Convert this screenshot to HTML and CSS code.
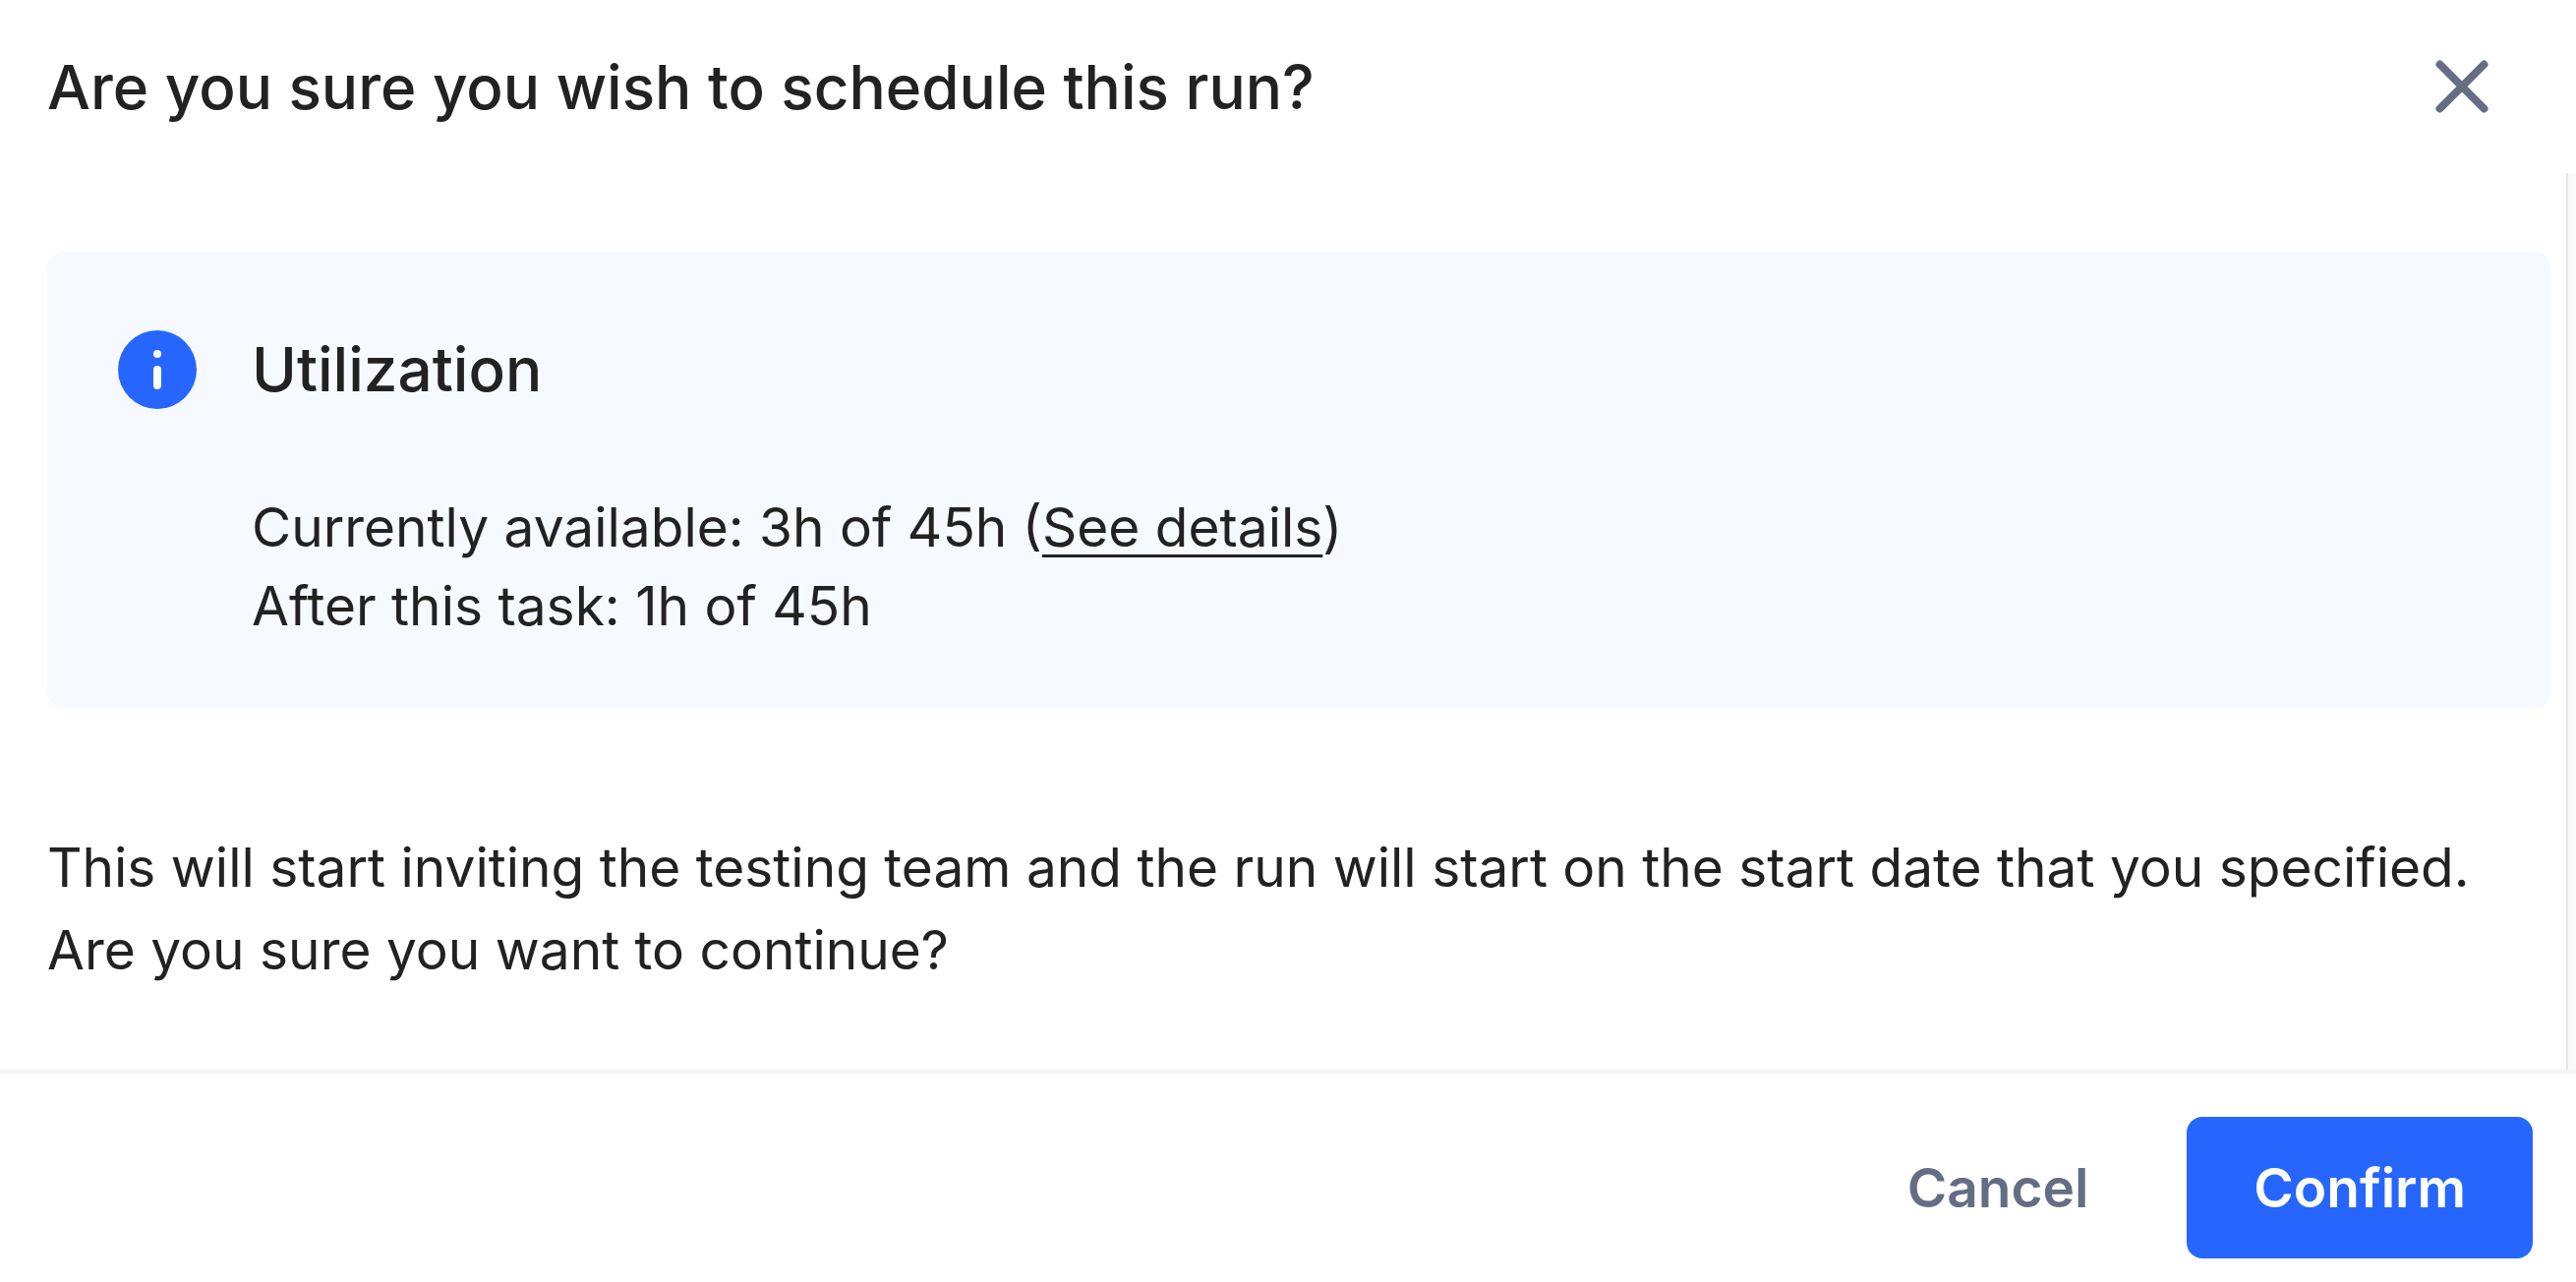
FILE: index.html
```html
<!DOCTYPE html>
<html lang="en">
<head>
    <meta charset="utf-8">
    <title>Schedule run</title>
    <link rel="stylesheet" href="styles.css">
</head>
<body>
    <div class="modal" role="dialog" aria-labelledby="modal-title">
        <header class="modal-header">
            <h1 id="modal-title">Are you sure you wish to schedule this run?</h1>
            <button type="button" class="close" aria-label="Close">
                <svg viewBox="0 0 56 56" aria-hidden="true">
                    <path d="M5.5 5.5L50.5 50.5M50.5 5.5L5.5 50.5"/>
                </svg>
            </button>
        </header>

        <main class="modal-body">
            <div class="content">
                <section class="notice">
                    <svg class="info-icon" viewBox="0 0 80 80" aria-hidden="true">
                        <circle cx="40" cy="40" r="40" fill="#2666ff"/>
                        <circle cx="40" cy="24" r="4" fill="#fff"/>
                        <rect x="36" y="36" width="8" height="24" rx="4" fill="#fff"/>
                    </svg>
                    <div class="notice-text">
                        <h2>Utilization</h2>
                        <p>Currently available: 3h of 45h (<a href="#details">See details</a>)<br>
                        After this task: 1h of 45h</p>
                    </div>
                </section>
                <p class="message">This will start inviting the testing team and the run will start on the start date that you specified. Are you sure you want to continue?</p>
            </div>
            <div class="scroll-track"></div>
        </main>

        <footer class="modal-footer">
            <button type="button" class="cancel">Cancel</button>
            <button type="button" class="confirm">Confirm</button>
        </footer>
    </div>
</body>
</html>
```
FILE: styles.css
```css
* {
    box-sizing: border-box;
}

body {
    margin: 0;
    background: #fff;
    color: #222;
    font-family: Inter, "Liberation Sans", sans-serif;
    font-size: 55px;
}

h1, h2, p {
    margin: 0;
}

h1, h2 {
    font-size: 62px;
    font-weight: 500;
}

button {
    border: none;
    background: none;
    font: inherit;
    cursor: pointer;
}

.modal {
    display: flex;
    flex-direction: column;
    min-height: 100vh;
}

.modal-header {
    display: flex;
    align-items: center;
    justify-content: space-between;
    height: 176px;
    padding: 0 88px 0 48px;
}

.close {
    padding: 0;
    line-height: 0;
}

.close svg {
    width: 56px;
    height: 56px;
    fill: none;
    stroke: #646d84;
    stroke-width: 8;
    stroke-linecap: round;
}

.modal-body {
    display: flex;
    flex: 1;
}

.content {
    flex: 1;
    padding: 80px 16px 0 48px;
}

.scroll-track {
    width: 10px;
    background: #fafafa;
    border-left: 2px solid #e6e6e6;
}

.notice {
    display: flex;
    gap: 56px;
    padding: 80px 72px 64px;
    border-radius: 16px;
    background: #f6f9ff;
}

.info-icon {
    width: 80px;
    height: 80px;
}

.notice h2 {
    margin-bottom: 80px;
    line-height: 80px;
}

.notice p {
    line-height: 80px;
}

.notice a {
    color: inherit;
    text-decoration-thickness: 3px;
    text-underline-offset: 8px;
}

.message {
    padding-top: 120px;
    line-height: 84px;
}

.modal-footer {
    display: flex;
    justify-content: flex-end;
    gap: 32px;
    padding: 44px 44px 24px;
    border-top: 4px solid #f4f4f4;
}

.modal-footer button {
    height: 144px;
    padding: 0 68px;
    border-radius: 16px;
    font-weight: 600;
}

.cancel {
    color: #646d84;
}

.confirm {
    background: #2666ff;
    color: #fff;
}
```
